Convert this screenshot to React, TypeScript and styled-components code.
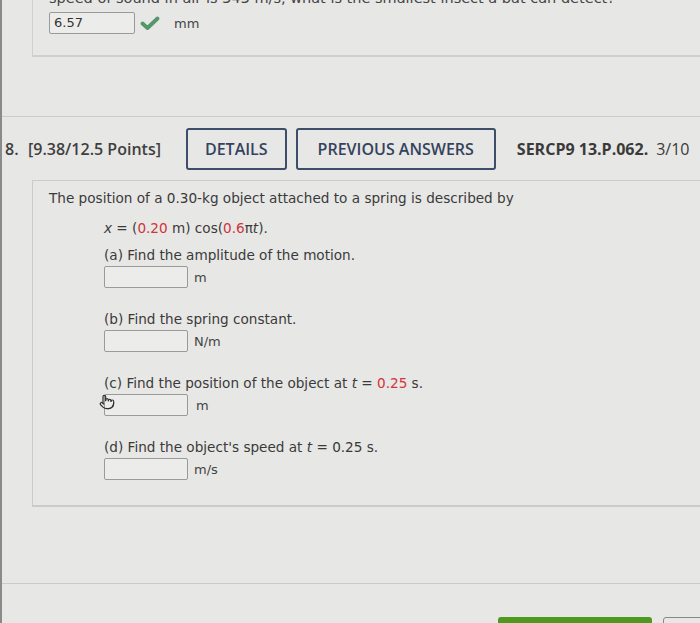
import React from "react";
import styled, { createGlobalStyle } from "styled-components";
import { Pointer } from "lucide-react";

const GlobalStyle = createGlobalStyle`
  html, body {
    margin: 0;
    padding: 0;
    background: #e7e7e5;
  }
  #root {
    height: 623px;
    overflow: hidden;
  }
`;

const Page = styled.div`
  height: 623px;
  border-left: 2px solid #8a8a8a;
  box-sizing: border-box;
  display: flex;
  flex-direction: column;
  color: #333;
  font-family: "DejaVu Sans", Verdana, sans-serif;
`;

const PrevPanel = styled.div`
  flex-shrink: 0;
  margin-left: 30px;
  height: 69px;
  margin-top: -12px;
  border-left: 1px solid #cfcfcd;
  border-bottom: 2px solid #cfcfcd;
  padding-left: 16px;
  box-sizing: border-box;
`;

const PrevText = styled.div`
  font-size: 14.5px;
  line-height: 20px;
  color: #444;
  white-space: nowrap;
`;

const AnswerRow = styled.div`
  display: flex;
  align-items: center;
  margin-top: 4px;
`;

const AnswerInput = styled.div<{ $width?: number }>`
  flex-shrink: 0;
  width: ${(p) => p.$width ?? 84}px;
  height: 22px;
  box-sizing: border-box;
  border: 1px solid #9a9a9a;
  border-radius: 2px;
  background: #ececea;
  font-family: "DejaVu Sans", Verdana, sans-serif;
  font-size: 13px;
  line-height: 20px;
  padding-left: 4px;
  color: #333;
`;

const Check = styled.svg`
  width: 20px;
  height: 16px;
  margin-left: 5px;
`;

const Unit = styled.span<{ $gap?: number }>`
  margin-left: ${(p) => p.$gap ?? 6}px;
  font-size: 13px;
  color: #444;
`;

const Divider = styled.div<{ $top: number }>`
  flex-shrink: 0;
  margin-top: ${(p) => p.$top}px;
  height: 1px;
  background: #cbcbc9;
`;

const Header = styled.div`
  flex-shrink: 0;
  display: flex;
  align-items: center;
  height: 42px;
  margin-top: 11px;
  padding-left: 3px;
  font-family: "Open Sans", sans-serif;
  font-size: 16px;
  font-weight: 600;
  color: #3f3f3f;
  white-space: nowrap;
  overflow: hidden;

  & > * {
    flex-shrink: 0;
  }
`;

const Number = styled.span`
  width: 23px;
`;

const Points = styled.span`
  margin-right: 25px;
`;

const OutlineButton = styled.div<{ $pad: number }>`
  height: 42px;
  box-sizing: border-box;
  padding: 0 ${(p) => p.$pad}px;
  display: flex;
  align-items: center;
  border: 2px solid #3e4e6a;
  border-radius: 3px;
  color: #34435d;
  margin-right: 9px;
`;

const Code = styled.span`
  margin-left: 12px;
  font-weight: 700;
  color: #3a3a3a;
`;

const Count = styled.span`
  margin-left: 8px;
  font-weight: 400;
  color: #3a3a3a;
`;

const QuestionBox = styled.div`
  flex-shrink: 0;
  margin-top: 10px;
  margin-left: 30px;
  height: 327px;
  box-sizing: border-box;
  border-top: 1px solid #cbcbc9;
  border-left: 1px solid #cbcbc9;
  border-bottom: 2px solid #cbcbc9;
  padding: 2px 0 0 16px;
`;

const Line = styled.div<{ $indent?: number }>`
  margin-left: ${(p) => p.$indent ?? 0}px;
  font-size: 13.6px;
  line-height: 30px;
  color: #3a3a3a;
  white-space: nowrap;
`;

const Red = styled.span`
  color: #d2343c;
`;

const Part = styled.div<{ $first?: boolean }>`
  margin-left: 55px;
  margin-top: ${(p) => (p.$first ? 2 : 21)}px;
`;

const Label = styled.div`
  font-size: 13.6px;
  line-height: 20px;
  color: #3a3a3a;
  white-space: nowrap;
`;

const InputRow = styled.div`
  position: relative;
  display: flex;
  align-items: center;
  margin-top: 1px;
`;

const Cursor = styled.div`
  position: absolute;
  left: -5px;
  top: 0px;
  color: #333;
  display: flex;
`;

const Footer = styled.div`
  flex-shrink: 0;
  display: flex;
  margin-top: 33px;
  padding-left: 496px;
`;

const GreenButton = styled.div`
  flex-shrink: 0;
  width: 154px;
  height: 20px;
  background: #4e9a1f;
  border-radius: 3px;
  margin-right: 11px;
`;

const GhostButton = styled.div`
  flex-shrink: 0;
  width: 60px;
  height: 20px;
  border: 1px solid #888;
  border-radius: 3px;
`;

export default function App() {
  return (
    <>
      <GlobalStyle />
      <Page>
        <PrevPanel>
          <PrevText>
            speed of sound in air is 343 m/s, what is the smallest insect a bat can detect?
          </PrevText>
          <AnswerRow>
            <AnswerInput $width={86}>6.57</AnswerInput>
            <Check viewBox="0 0 20 16">
              <path
                d="M2.5 8.5 L7.5 13 L17.5 3.5"
                fill="none"
                stroke="#55966a"
                strokeWidth="3.8"
                strokeLinecap="round"
                strokeLinejoin="round"
              />
            </Check>
            <Unit $gap={14}>mm</Unit>
          </AnswerRow>
        </PrevPanel>

        <Divider $top={59} />

        <Header>
          <Number>8.</Number>
          <Points>[9.38/12.5 Points]</Points>
          <OutlineButton $pad={17}>DETAILS</OutlineButton>
          <OutlineButton $pad={20}>PREVIOUS ANSWERS</OutlineButton>
          <Code>SERCP9 13.P.062.</Code>
          <Count>3/10</Count>
        </Header>

        <QuestionBox>
          <Line>The position of a 0.30-kg object attached to a spring is described by</Line>
          <Line $indent={55}>
            <i>x</i> = (<Red>0.20</Red> m) cos(<Red>0.6</Red>π<i>t</i>).
          </Line>
          <Part $first>
            <Label>(a) Find the amplitude of the motion.</Label>
            <InputRow>
              <AnswerInput />
              <Unit>m</Unit>
            </InputRow>
          </Part>
          <Part>
            <Label>(b) Find the spring constant.</Label>
            <InputRow>
              <AnswerInput />
              <Unit>N/m</Unit>
            </InputRow>
          </Part>
          <Part>
            <Label>
              (c) Find the position of the object at <i>t</i> = <Red>0.25</Red> s.
            </Label>
            <InputRow>
              <AnswerInput />
              <Unit $gap={8}>m</Unit>
              <Cursor>
                <Pointer size={16} strokeWidth={1.8} />
              </Cursor>
            </InputRow>
          </Part>
          <Part>
            <Label>
              (d) Find the object's speed at <i>t</i> = 0.25 s.
            </Label>
            <InputRow>
              <AnswerInput />
              <Unit>m/s</Unit>
            </InputRow>
          </Part>
        </QuestionBox>

        <Divider $top={76} />

        <Footer>
          <GreenButton />
          <GhostButton />
        </Footer>
      </Page>
    </>
  );
}
